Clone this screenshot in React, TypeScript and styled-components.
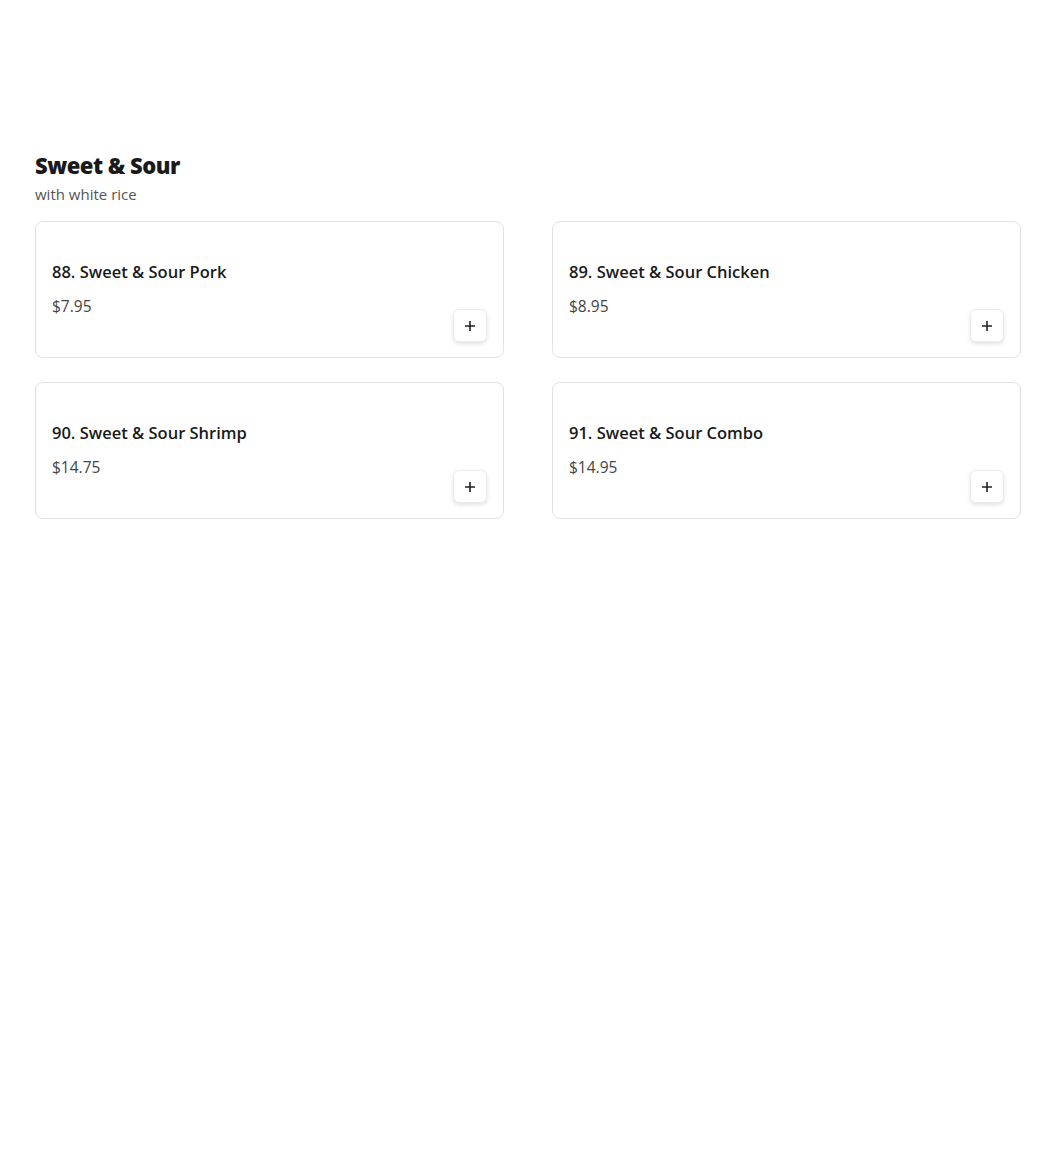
import React from "react";
import styled, { createGlobalStyle } from "styled-components";

const Global = createGlobalStyle`
  html, body { margin: 0; padding: 0; background: #fff; }
  body { font-family: "Open Sans", "Liberation Sans", sans-serif; color: #1a1a1a; }
`;

const Section = styled.section`
  padding: 150px 29px 0 35px;
`;

const Heading = styled.h2`
  margin: 0;
  font-size: 22px;
  line-height: 30px;
  font-weight: 800;
  letter-spacing: -0.5px;
  color: #1a1a1a;
`;

const Sub = styled.p`
  margin: 4px 0 0;
  font-size: 15px;
  line-height: 20px;
  color: #555;
`;

const Grid = styled.div`
  margin-top: 17px;
  display: grid;
  grid-template-columns: 1fr 1fr;
  column-gap: 48px;
  row-gap: 24px;
`;

const Card = styled.div`
  box-sizing: border-box;
  height: 137px;
  border: 1px solid #e2e2e2;
  border-radius: 8px;
  padding: 16px 16px 15px;
  display: grid;
  grid-template-columns: 1fr auto;
`;

const Info = styled.div`
  padding-top: 22px;
  display: flex;
  flex-direction: column;
`;

const Title = styled.div`
  font-size: 16.5px;
  line-height: 24px;
  font-weight: 600;
  color: #1a1a1a;
`;

const Price = styled.div`
  margin-top: 11px;
  font-size: 15.5px;
  line-height: 22px;
  color: #444;
`;

const AddButton = styled.button`
  align-self: end;
  box-sizing: border-box;
  width: 34px;
  height: 33px;
  padding: 0;
  border: 1px solid #ececec;
  border-radius: 6px;
  background: #fff;
  box-shadow: 0 2px 4px rgba(0, 0, 0, 0.12);
  display: flex;
  align-items: center;
  justify-content: center;
  color: #222;
  cursor: pointer;
`;

const items = [
  { name: "88. Sweet & Sour Pork", price: "$7.95" },
  { name: "89. Sweet & Sour Chicken", price: "$8.95" },
  { name: "90. Sweet & Sour Shrimp", price: "$14.75" },
  { name: "91. Sweet & Sour Combo", price: "$14.95" },
];

const PlusIcon = () => (
  <svg width="12" height="12" viewBox="0 0 12 12" fill="none">
    <path d="M6 1v10M1 6h10" stroke="currentColor" strokeWidth="1.6" />
  </svg>
);

export default function App() {
  return (
    <>
      <Global />
      <Section>
        <Heading>Sweet &amp; Sour</Heading>
        <Sub>with white rice</Sub>
        <Grid>
          {items.map((it) => (
            <Card key={it.name}>
              <Info>
                <Title>{it.name}</Title>
                <Price>{it.price}</Price>
              </Info>
              <AddButton aria-label="Add">
                <PlusIcon />
              </AddButton>
            </Card>
          ))}
        </Grid>
      </Section>
    </>
  );
}
